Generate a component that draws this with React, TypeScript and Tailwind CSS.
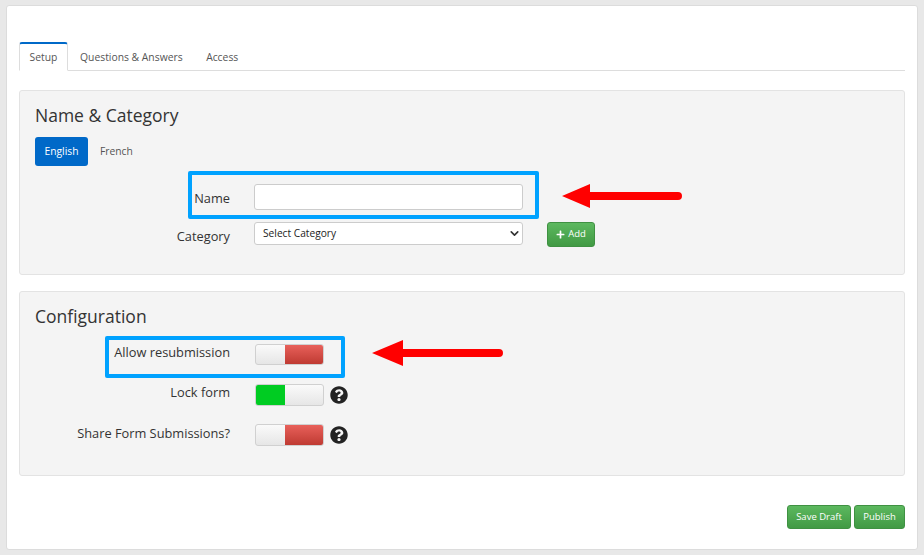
import React from 'react';
import { ChevronDown } from 'lucide-react';
import { FaPlus, FaQuestionCircle } from 'react-icons/fa';

const greenBtn = 'rounded-[3px] border border-[#3f9142] bg-gradient-to-b from-[#5cb85f] to-[#419a44] text-white';

const Toggle: React.FC<{ on?: boolean; short?: boolean }> = ({ on, short }) => (
  <div className={`flex w-[68.5px] overflow-hidden rounded-[3px] border border-[#d0d0d0] bg-gradient-to-b from-[#fafafa] to-[#e6e6e6] ${short ? 'h-[21px]' : 'h-[22px]'}`}>
    {on && <div className="w-[29px] bg-[#00cc22]" />}
    <div className="flex-1" />
    {!on && <div className="w-[37.5px] bg-gradient-to-b from-[#e8605a] to-[#bf3a32]" />}
  </div>
);

const HelpIcon: React.FC = () => <FaQuestionCircle size={18} className="text-[#222]" />;

const App: React.FC = () => {
  return (
    <div className="h-[555px] w-[924px] overflow-hidden bg-[#e8e8e8] pl-[6px] pr-[6px] pt-[5px] font-['Open_Sans',sans-serif] text-[#333]">
      <div className="relative h-[545px] rounded-[3px] border border-[#dcdcdc] bg-white pl-[12px] pr-[12px] pt-[36px]">
        {/* tabs */}
        <div className="flex h-[29px] items-stretch border-b border-[#ddd] text-[10.35px] text-[#555]">
          <div className="-mb-px flex w-[49px] items-center justify-center rounded-t-[3px] border-x border-b border-t-2 border-x-[#ddd] border-b-white border-t-[#0069c8] bg-white pt-[2px]">
            Setup
          </div>
          <div className="flex items-center pl-[12px] pt-[3px]">Questions &amp; Answers</div>
          <div className="flex items-center pl-[23.5px] pt-[3px]">Access</div>
        </div>

        {/* name and category */}
        <div className="mt-[19px] h-[185px] rounded-[3px] border border-[#e3e3e3] bg-[#f4f4f4] px-[15px] pt-[12px]">
          <h2 className="text-[17.5px] leading-[25px] text-[#333]">Name &amp; Category</h2>
          <div className="mt-[9px] flex items-center text-[10.3px]">
            <div className="flex h-[29px] w-[53px] items-center justify-center rounded-[3px] bg-[#0069c8] text-white">English</div>
            <div className="pl-[12px] text-[#555]">French</div>
          </div>
          <div className="mt-[18px] flex items-start">
            <label className="mt-[1px] h-[25px] w-[195px] text-right text-[12.8px] leading-[26px]">Name</label>
            <input className="ml-[24px] h-[26px] w-[269px] rounded-[3px] border border-[#ccc] bg-white" />
          </div>
          <div className="mt-[12px] flex items-start">
            <label className="mt-[1px] w-[195px] text-right text-[12.8px] leading-[26px]">Category</label>
            <div className="ml-[24px] flex h-[23px] w-[269px] items-center justify-between rounded-[3px] border border-[#ccc] bg-white pl-[8px] pr-[1px] text-[10.2px] text-[#222]">
              Select Category
              <ChevronDown size={13} strokeWidth={3} className="text-[#333]" />
            </div>
            <button className={`ml-[24px] flex h-[25px] w-[48px] items-center justify-center gap-[3px] text-[9.5px] ${greenBtn}`}>
              <FaPlus size={9} />
              Add
            </button>
          </div>
        </div>

        {/* configuration */}
        <div className="mt-[16px] h-[185px] rounded-[3px] border border-[#e3e3e3] bg-[#f4f4f4] px-[15px] pt-[12px]">
          <h2 className="text-[17.5px] leading-[25px] text-[#333]">Configuration</h2>
          <div className="mt-[15px] flex items-start">
            <label className="w-[195px] text-right text-[12.8px] leading-[16px]">Allow resubmission</label>
            <div className="ml-[25px]"><Toggle short /></div>
          </div>
          <div className="mt-[19px] flex items-start">
            <label className="w-[195px] text-right text-[12.8px] leading-[16px]">Lock form</label>
            <div className="ml-[25px]"><Toggle on /></div>
            <div className="ml-[6.5px] mt-[2px]"><HelpIcon /></div>
          </div>
          <div className="mt-[18px] flex items-start">
            <label className="mt-[1px] w-[195px] text-right text-[12.8px] leading-[16px]">Share Form Submissions?</label>
            <div className="ml-[25px]"><Toggle /></div>
            <div className="ml-[6.5px] mt-[2px]"><HelpIcon /></div>
          </div>
        </div>

        {/* actions */}
        <div className="mt-[29px] flex justify-end gap-[3px] text-[9.5px]">
          <button className={`h-[24px] w-[64px] ${greenBtn}`}>Save Draft</button>
          <button className={`h-[24px] w-[51px] ${greenBtn}`}>Publish</button>
        </div>

        {/* annotations */}
        <div className="absolute left-[181px] top-[165px] h-[48px] w-[351px] rounded-[2px] border-[4px] border-[#00a2ff]" />
        <div className="absolute left-[98px] top-[330px] h-[42px] w-[240px] rounded-[2px] border-[4px] border-[#00a2ff]" />
        <svg className="absolute left-[555px] top-[176px]" width="122" height="28" viewBox="0 0 122 28">
          <path d="M0 14 L28 2 V10 H116 a4 4 0 0 1 0 8 H28 V26 Z" fill="#ff0000" />
        </svg>
        <svg className="absolute left-[365px] top-[333px]" width="133" height="28" viewBox="0 0 133 28">
          <path d="M0 14 L31 1 V10 H127 a4 4 0 0 1 0 8 H31 V27 Z" fill="#ff0000" />
        </svg>
      </div>
    </div>
  );
};

export default App;
